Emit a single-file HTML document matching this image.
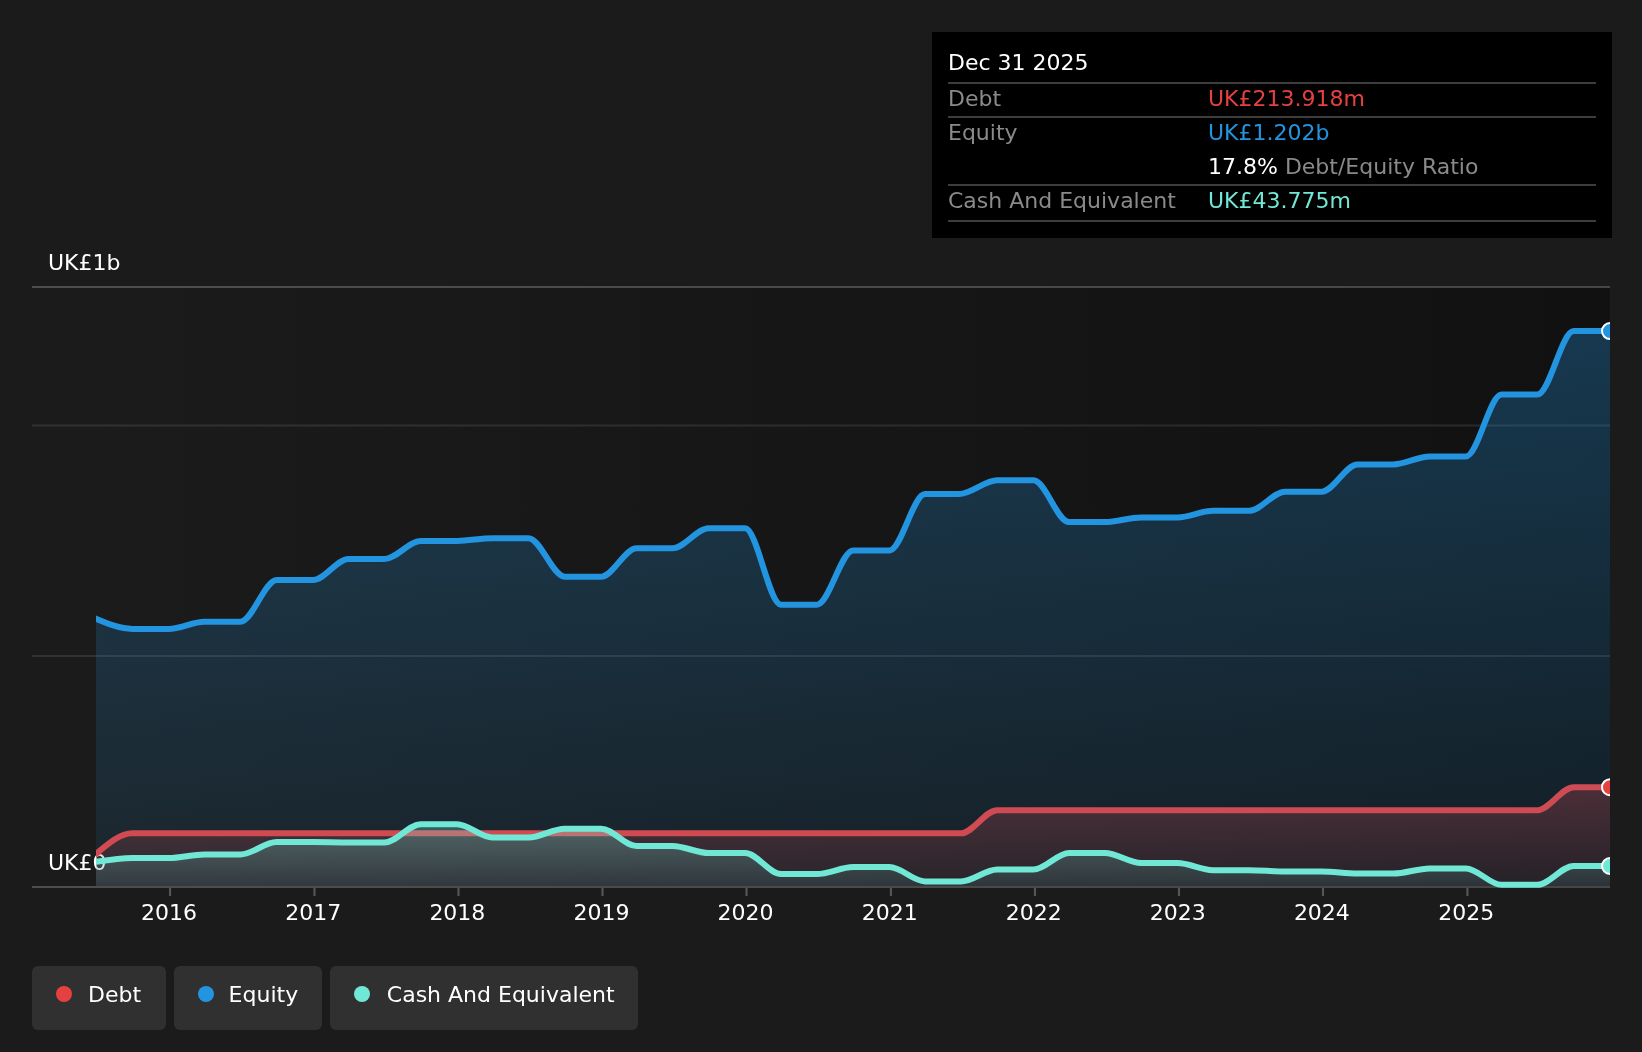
<!DOCTYPE html>
<html lang="en"><head><meta charset="utf-8"><title>Debt to Equity History</title>
<style>
html,body{margin:0;padding:0;background:#1b1b1b;}
body{width:1642px;height:1052px;position:relative;overflow:hidden;}
svg text{white-space:pre;}
.wrap{position:absolute;left:0;top:0;width:1642px;height:1052px;will-change:transform;font-family:"DejaVu Sans","Liberation Sans",sans-serif;font-size:22px;line-height:26px;color:#fff;}
.legend-item{position:absolute;top:966px;height:64px;border-radius:6px;background:#303030;}
.legend-item .dot{position:absolute;left:24px;top:20px;width:16px;height:16px;border-radius:50%;}
.legend-label{position:absolute;top:16px;white-space:nowrap;}
.tooltip{position:absolute;left:932px;top:32px;width:680px;height:206px;background:#000;}
.tt-row{position:absolute;left:16px;width:648px;height:26px;white-space:nowrap;}
.tt-key{position:absolute;left:0;top:0;color:#8a8a8a;}
.tt-val{position:absolute;left:260px;top:0;}
.tt-sep{position:absolute;left:16px;width:648px;height:2px;background:#3d3d3d;}
</style></head><body>
<div class="wrap">
<svg width="1642" height="1052" viewBox="0 0 1642 1052" style="position:absolute;left:0;top:0;display:block" font-family='"DejaVu Sans","Liberation Sans",sans-serif' font-size="22">
<defs>
<linearGradient id="gbg" gradientUnits="userSpaceOnUse" x1="96" y1="0" x2="1610" y2="0"><stop offset="0" stop-color="#1b1b1b"/><stop offset="1" stop-color="#111111"/></linearGradient>
<linearGradient id="ge" gradientUnits="userSpaceOnUse" x1="0" y1="331" x2="0" y2="886"><stop offset="0" stop-color="#2394df" stop-opacity="0.30"/><stop offset="1" stop-color="#2394df" stop-opacity="0.09"/></linearGradient>
<linearGradient id="gd" gradientUnits="userSpaceOnUse" x1="0" y1="787" x2="0" y2="886"><stop offset="0" stop-color="#e64141" stop-opacity="0.30"/><stop offset="1" stop-color="#e64141" stop-opacity="0.09"/></linearGradient>
<linearGradient id="gc" gradientUnits="userSpaceOnUse" x1="0" y1="824" x2="0" y2="886"><stop offset="0" stop-color="#71e7d6" stop-opacity="0.30"/><stop offset="1" stop-color="#71e7d6" stop-opacity="0.09"/></linearGradient>
<clipPath id="cp"><rect x="96" y="280" width="1514" height="608"/></clipPath>
</defs>
<rect x="0" y="0" width="1642" height="1052" fill="#1b1b1b"/>
<rect x="96" y="286" width="1514" height="602" fill="url(#gbg)"/>
<rect x="32" y="286" width="1578" height="2" fill="#ffffff" fill-opacity="0.224"/>
<rect x="32" y="424.5" width="1578" height="2" fill="#ffffff" fill-opacity="0.1"/>
<rect x="32" y="655" width="1578" height="2" fill="#ffffff" fill-opacity="0.1"/>
<rect x="32" y="886" width="1578" height="2" fill="#ffffff" fill-opacity="0.224"/>
<text x="48" y="270" fill="#ffffff">UK£1b</text>
<text x="48" y="870" fill="#ffffff">UK£0</text>
<g clip-path="url(#cp)">
<path d="M88.00,860.84 L96.00,854.00C108.10,843.65 120.20,833.30 132.30,833.30C144.40,833.30 156.50,833.30 168.60,833.30C180.57,833.30 192.54,833.30 204.51,833.30C216.48,833.30 228.45,833.30 240.42,833.30C252.52,833.30 264.62,833.30 276.72,833.30C288.82,833.30 300.92,833.30 313.02,833.30C324.86,833.30 336.69,833.30 348.53,833.30C360.50,833.30 372.47,833.30 384.44,833.30C396.54,833.30 408.64,833.30 420.74,833.30C432.84,833.30 444.94,833.30 457.04,833.30C468.88,833.30 480.71,833.30 492.55,833.30C504.52,833.30 516.49,833.30 528.46,833.30C540.56,833.30 552.66,833.30 564.76,833.30C576.86,833.30 588.96,833.30 601.06,833.30C612.90,833.30 624.74,833.30 636.57,833.30C648.54,833.30 660.51,833.30 672.48,833.30C684.58,833.30 696.68,833.30 708.78,833.30C720.88,833.30 732.98,833.30 745.08,833.30C757.05,833.30 769.02,833.30 780.99,833.30C792.96,833.30 804.93,833.30 816.90,833.30C829.00,833.30 841.10,833.30 853.20,833.30C865.30,833.30 877.40,833.30 889.50,833.30C901.34,833.30 913.17,833.30 925.01,833.30C936.98,833.30 948.95,833.30 960.92,833.30C973.02,833.30 985.12,810.20 997.22,810.20C1009.32,810.20 1021.42,810.20 1033.52,810.20C1045.36,810.20 1057.19,810.20 1069.03,810.20C1081.00,810.20 1092.97,810.20 1104.94,810.20C1117.04,810.20 1129.14,810.20 1141.24,810.20C1153.34,810.20 1165.44,810.20 1177.54,810.20C1189.38,810.20 1201.22,810.20 1213.05,810.20C1225.02,810.20 1236.99,810.20 1248.96,810.20C1261.06,810.20 1273.16,810.20 1285.26,810.20C1297.36,810.20 1309.46,810.20 1321.56,810.20C1333.53,810.20 1345.50,810.20 1357.47,810.20C1369.44,810.20 1381.41,810.20 1393.38,810.20C1405.48,810.20 1417.58,810.20 1429.68,810.20C1441.78,810.20 1453.88,810.20 1465.98,810.20C1477.82,810.20 1489.65,810.20 1501.49,810.20C1513.46,810.20 1525.43,810.20 1537.40,810.20C1549.50,810.20 1561.60,787.20 1573.70,787.20C1585.80,787.20 1597.90,787.20 1610.00,787.20L1618.00,787.20L1618.00,886 L88.00,886 Z" fill="url(#gd)" stroke="none"/>
<path d="M88.00,860.84 L96.00,854.00C108.10,843.65 120.20,833.30 132.30,833.30C144.40,833.30 156.50,833.30 168.60,833.30C180.57,833.30 192.54,833.30 204.51,833.30C216.48,833.30 228.45,833.30 240.42,833.30C252.52,833.30 264.62,833.30 276.72,833.30C288.82,833.30 300.92,833.30 313.02,833.30C324.86,833.30 336.69,833.30 348.53,833.30C360.50,833.30 372.47,833.30 384.44,833.30C396.54,833.30 408.64,833.30 420.74,833.30C432.84,833.30 444.94,833.30 457.04,833.30C468.88,833.30 480.71,833.30 492.55,833.30C504.52,833.30 516.49,833.30 528.46,833.30C540.56,833.30 552.66,833.30 564.76,833.30C576.86,833.30 588.96,833.30 601.06,833.30C612.90,833.30 624.74,833.30 636.57,833.30C648.54,833.30 660.51,833.30 672.48,833.30C684.58,833.30 696.68,833.30 708.78,833.30C720.88,833.30 732.98,833.30 745.08,833.30C757.05,833.30 769.02,833.30 780.99,833.30C792.96,833.30 804.93,833.30 816.90,833.30C829.00,833.30 841.10,833.30 853.20,833.30C865.30,833.30 877.40,833.30 889.50,833.30C901.34,833.30 913.17,833.30 925.01,833.30C936.98,833.30 948.95,833.30 960.92,833.30C973.02,833.30 985.12,810.20 997.22,810.20C1009.32,810.20 1021.42,810.20 1033.52,810.20C1045.36,810.20 1057.19,810.20 1069.03,810.20C1081.00,810.20 1092.97,810.20 1104.94,810.20C1117.04,810.20 1129.14,810.20 1141.24,810.20C1153.34,810.20 1165.44,810.20 1177.54,810.20C1189.38,810.20 1201.22,810.20 1213.05,810.20C1225.02,810.20 1236.99,810.20 1248.96,810.20C1261.06,810.20 1273.16,810.20 1285.26,810.20C1297.36,810.20 1309.46,810.20 1321.56,810.20C1333.53,810.20 1345.50,810.20 1357.47,810.20C1369.44,810.20 1381.41,810.20 1393.38,810.20C1405.48,810.20 1417.58,810.20 1429.68,810.20C1441.78,810.20 1453.88,810.20 1465.98,810.20C1477.82,810.20 1489.65,810.20 1501.49,810.20C1513.46,810.20 1525.43,810.20 1537.40,810.20C1549.50,810.20 1561.60,787.20 1573.70,787.20C1585.80,787.20 1597.90,787.20 1610.00,787.20L1618.00,787.20" fill="none" stroke="#e64141" stroke-width="6" stroke-linejoin="round" stroke-linecap="butt"/>

<path d="M88.00,615.33 L96.00,618.70C108.10,623.80 120.20,628.90 132.30,628.90C144.40,628.90 156.50,628.90 168.60,628.90C180.57,628.90 192.54,621.70 204.51,621.70C216.48,621.70 228.45,621.70 240.42,621.70C252.52,621.70 264.62,580.00 276.72,580.00C288.82,580.00 300.92,580.00 313.02,580.00C324.86,580.00 336.69,559.00 348.53,559.00C360.50,559.00 372.47,559.00 384.44,559.00C396.54,559.00 408.64,541.00 420.74,541.00C432.84,541.00 444.94,541.00 457.04,541.00C468.88,541.00 480.71,538.20 492.55,538.20C504.52,538.20 516.49,538.20 528.46,538.20C540.56,538.20 552.66,576.70 564.76,576.70C576.86,576.70 588.96,576.70 601.06,576.70C612.90,576.70 624.74,548.20 636.57,548.20C648.54,548.20 660.51,548.20 672.48,548.20C684.58,548.20 696.68,528.30 708.78,528.30C720.88,528.30 732.98,528.30 745.08,528.30C757.05,528.30 769.02,604.70 780.99,604.70C792.96,604.70 804.93,604.70 816.90,604.70C829.00,604.70 841.10,550.40 853.20,550.40C865.30,550.40 877.40,550.40 889.50,550.40C901.34,550.40 913.17,494.10 925.01,494.10C936.35,494.10 947.68,494.10 959.02,494.10C971.75,494.10 984.48,480.30 997.22,480.30C1009.32,480.30 1021.42,480.30 1033.52,480.30C1045.36,480.30 1057.19,522.10 1069.03,522.10C1081.00,522.10 1092.97,522.10 1104.94,522.10C1117.04,522.10 1129.14,517.40 1141.24,517.40C1153.34,517.40 1165.44,517.40 1177.54,517.40C1189.38,517.40 1201.22,510.80 1213.05,510.80C1225.02,510.80 1236.99,510.80 1248.96,510.80C1261.06,510.80 1273.16,491.70 1285.26,491.70C1297.36,491.70 1309.46,491.70 1321.56,491.70C1333.53,491.70 1345.50,464.40 1357.47,464.40C1369.44,464.40 1381.41,464.40 1393.38,464.40C1405.48,464.40 1417.58,456.40 1429.68,456.40C1441.78,456.40 1453.88,456.40 1465.98,456.40C1477.82,456.40 1489.65,394.60 1501.49,394.60C1513.46,394.60 1525.43,394.60 1537.40,394.60C1549.50,394.60 1561.60,331.10 1573.70,331.10C1585.80,331.10 1597.90,331.10 1610.00,331.10L1618.00,331.10L1618.00,886 L88.00,886 Z" fill="url(#ge)" stroke="none"/>
<path d="M88.00,615.33 L96.00,618.70C108.10,623.80 120.20,628.90 132.30,628.90C144.40,628.90 156.50,628.90 168.60,628.90C180.57,628.90 192.54,621.70 204.51,621.70C216.48,621.70 228.45,621.70 240.42,621.70C252.52,621.70 264.62,580.00 276.72,580.00C288.82,580.00 300.92,580.00 313.02,580.00C324.86,580.00 336.69,559.00 348.53,559.00C360.50,559.00 372.47,559.00 384.44,559.00C396.54,559.00 408.64,541.00 420.74,541.00C432.84,541.00 444.94,541.00 457.04,541.00C468.88,541.00 480.71,538.20 492.55,538.20C504.52,538.20 516.49,538.20 528.46,538.20C540.56,538.20 552.66,576.70 564.76,576.70C576.86,576.70 588.96,576.70 601.06,576.70C612.90,576.70 624.74,548.20 636.57,548.20C648.54,548.20 660.51,548.20 672.48,548.20C684.58,548.20 696.68,528.30 708.78,528.30C720.88,528.30 732.98,528.30 745.08,528.30C757.05,528.30 769.02,604.70 780.99,604.70C792.96,604.70 804.93,604.70 816.90,604.70C829.00,604.70 841.10,550.40 853.20,550.40C865.30,550.40 877.40,550.40 889.50,550.40C901.34,550.40 913.17,494.10 925.01,494.10C936.35,494.10 947.68,494.10 959.02,494.10C971.75,494.10 984.48,480.30 997.22,480.30C1009.32,480.30 1021.42,480.30 1033.52,480.30C1045.36,480.30 1057.19,522.10 1069.03,522.10C1081.00,522.10 1092.97,522.10 1104.94,522.10C1117.04,522.10 1129.14,517.40 1141.24,517.40C1153.34,517.40 1165.44,517.40 1177.54,517.40C1189.38,517.40 1201.22,510.80 1213.05,510.80C1225.02,510.80 1236.99,510.80 1248.96,510.80C1261.06,510.80 1273.16,491.70 1285.26,491.70C1297.36,491.70 1309.46,491.70 1321.56,491.70C1333.53,491.70 1345.50,464.40 1357.47,464.40C1369.44,464.40 1381.41,464.40 1393.38,464.40C1405.48,464.40 1417.58,456.40 1429.68,456.40C1441.78,456.40 1453.88,456.40 1465.98,456.40C1477.82,456.40 1489.65,394.60 1501.49,394.60C1513.46,394.60 1525.43,394.60 1537.40,394.60C1549.50,394.60 1561.60,331.10 1573.70,331.10C1585.80,331.10 1597.90,331.10 1610.00,331.10L1618.00,331.10" fill="none" stroke="#2394df" stroke-width="6" stroke-linejoin="round" stroke-linecap="butt"/>

<path d="M88.00,863.19 L96.00,861.90C108.10,859.95 120.20,858.00 132.30,858.00C144.40,858.00 156.50,858.00 168.60,858.00C180.57,858.00 192.54,854.40 204.51,854.40C216.48,854.40 228.45,854.40 240.42,854.40C252.52,854.40 264.62,842.10 276.72,842.10C288.82,842.10 300.92,842.10 313.02,842.10C324.86,842.10 336.69,842.50 348.53,842.50C360.50,842.50 372.47,842.50 384.44,842.50C396.54,842.50 408.64,824.20 420.74,824.20C432.84,824.20 444.94,824.20 457.04,824.20C468.88,824.20 480.71,837.50 492.55,837.50C504.52,837.50 516.49,837.50 528.46,837.50C540.56,837.50 552.66,828.70 564.76,828.70C576.86,828.70 588.96,828.70 601.06,828.70C612.90,828.70 624.74,846.00 636.57,846.00C648.54,846.00 660.51,846.00 672.48,846.00C684.58,846.00 696.68,853.00 708.78,853.00C720.88,853.00 732.98,853.00 745.08,853.00C757.05,853.00 769.02,874.00 780.99,874.00C792.96,874.00 804.93,874.00 816.90,874.00C829.00,874.00 841.10,867.10 853.20,867.10C865.30,867.10 877.40,867.10 889.50,867.10C901.34,867.10 913.17,881.40 925.01,881.40C936.98,881.40 948.95,881.40 960.92,881.40C973.02,881.40 985.12,869.50 997.22,869.50C1009.32,869.50 1021.42,869.50 1033.52,869.50C1045.36,869.50 1057.19,853.00 1069.03,853.00C1081.00,853.00 1092.97,853.00 1104.94,853.00C1117.04,853.00 1129.14,863.10 1141.24,863.10C1153.34,863.10 1165.44,863.10 1177.54,863.10C1189.38,863.10 1201.22,870.20 1213.05,870.20C1225.02,870.20 1236.99,870.20 1248.96,870.20C1261.06,870.20 1273.16,871.50 1285.26,871.50C1297.36,871.50 1309.46,871.50 1321.56,871.50C1333.53,871.50 1345.50,873.60 1357.47,873.60C1369.44,873.60 1381.41,873.60 1393.38,873.60C1405.48,873.60 1417.58,868.40 1429.68,868.40C1441.78,868.40 1453.88,868.40 1465.98,868.40C1477.82,868.40 1489.65,884.80 1501.49,884.80C1513.46,884.80 1525.43,884.80 1537.40,884.80C1549.50,884.80 1561.60,866.00 1573.70,866.00C1585.80,866.00 1597.90,866.00 1610.00,866.00L1618.00,866.00L1618.00,886 L88.00,886 Z" fill="url(#gc)" stroke="none"/>
<path d="M88.00,863.19 L96.00,861.90C108.10,859.95 120.20,858.00 132.30,858.00C144.40,858.00 156.50,858.00 168.60,858.00C180.57,858.00 192.54,854.40 204.51,854.40C216.48,854.40 228.45,854.40 240.42,854.40C252.52,854.40 264.62,842.10 276.72,842.10C288.82,842.10 300.92,842.10 313.02,842.10C324.86,842.10 336.69,842.50 348.53,842.50C360.50,842.50 372.47,842.50 384.44,842.50C396.54,842.50 408.64,824.20 420.74,824.20C432.84,824.20 444.94,824.20 457.04,824.20C468.88,824.20 480.71,837.50 492.55,837.50C504.52,837.50 516.49,837.50 528.46,837.50C540.56,837.50 552.66,828.70 564.76,828.70C576.86,828.70 588.96,828.70 601.06,828.70C612.90,828.70 624.74,846.00 636.57,846.00C648.54,846.00 660.51,846.00 672.48,846.00C684.58,846.00 696.68,853.00 708.78,853.00C720.88,853.00 732.98,853.00 745.08,853.00C757.05,853.00 769.02,874.00 780.99,874.00C792.96,874.00 804.93,874.00 816.90,874.00C829.00,874.00 841.10,867.10 853.20,867.10C865.30,867.10 877.40,867.10 889.50,867.10C901.34,867.10 913.17,881.40 925.01,881.40C936.98,881.40 948.95,881.40 960.92,881.40C973.02,881.40 985.12,869.50 997.22,869.50C1009.32,869.50 1021.42,869.50 1033.52,869.50C1045.36,869.50 1057.19,853.00 1069.03,853.00C1081.00,853.00 1092.97,853.00 1104.94,853.00C1117.04,853.00 1129.14,863.10 1141.24,863.10C1153.34,863.10 1165.44,863.10 1177.54,863.10C1189.38,863.10 1201.22,870.20 1213.05,870.20C1225.02,870.20 1236.99,870.20 1248.96,870.20C1261.06,870.20 1273.16,871.50 1285.26,871.50C1297.36,871.50 1309.46,871.50 1321.56,871.50C1333.53,871.50 1345.50,873.60 1357.47,873.60C1369.44,873.60 1381.41,873.60 1393.38,873.60C1405.48,873.60 1417.58,868.40 1429.68,868.40C1441.78,868.40 1453.88,868.40 1465.98,868.40C1477.82,868.40 1489.65,884.80 1501.49,884.80C1513.46,884.80 1525.43,884.80 1537.40,884.80C1549.50,884.80 1561.60,866.00 1573.70,866.00C1585.80,866.00 1597.90,866.00 1610.00,866.00L1618.00,866.00" fill="none" stroke="#71e7d6" stroke-width="6" stroke-linejoin="round" stroke-linecap="butt"/>

</g>
<g clip-path="url(#cp)">
<circle cx="1610" cy="331.1" r="8" fill="#2394df" stroke="#ffffff" stroke-width="2"/>
<circle cx="1610" cy="787.2" r="8" fill="#e64141" stroke="#ffffff" stroke-width="2"/>
<circle cx="1610" cy="866.0" r="8" fill="#71e7d6" stroke="#ffffff" stroke-width="2"/>
</g>
<rect x="168.95" y="888" width="2.2" height="8" fill="#555555"/>
<text x="168.95" y="920" fill="#ffffff" text-anchor="middle">2016</text>
<rect x="313.36" y="888" width="2.2" height="8" fill="#555555"/>
<text x="313.36" y="920" fill="#ffffff" text-anchor="middle">2017</text>
<rect x="457.38" y="888" width="2.2" height="8" fill="#555555"/>
<text x="457.38" y="920" fill="#ffffff" text-anchor="middle">2018</text>
<rect x="601.40" y="888" width="2.2" height="8" fill="#555555"/>
<text x="601.40" y="920" fill="#ffffff" text-anchor="middle">2019</text>
<rect x="745.42" y="888" width="2.2" height="8" fill="#555555"/>
<text x="745.42" y="920" fill="#ffffff" text-anchor="middle">2020</text>
<rect x="889.83" y="888" width="2.2" height="8" fill="#555555"/>
<text x="889.83" y="920" fill="#ffffff" text-anchor="middle">2021</text>
<rect x="1033.85" y="888" width="2.2" height="8" fill="#555555"/>
<text x="1033.85" y="920" fill="#ffffff" text-anchor="middle">2022</text>
<rect x="1177.87" y="888" width="2.2" height="8" fill="#555555"/>
<text x="1177.87" y="920" fill="#ffffff" text-anchor="middle">2023</text>
<rect x="1321.88" y="888" width="2.2" height="8" fill="#555555"/>
<text x="1321.88" y="920" fill="#ffffff" text-anchor="middle">2024</text>
<rect x="1466.30" y="888" width="2.2" height="8" fill="#555555"/>
<text x="1466.30" y="920" fill="#ffffff" text-anchor="middle">2025</text>
</svg>
<div class="legend">
<div class="legend-item" style="left:32px;width:134px"><span class="dot" style="background:#e64141"></span><span class="legend-label" style="left:56.0px">Debt</span></div>
<div class="legend-item" style="left:174px;width:148px"><span class="dot" style="background:#2394df"></span><span class="legend-label" style="left:54.6px">Equity</span></div>
<div class="legend-item" style="left:330px;width:308px"><span class="dot" style="background:#71e7d6"></span><span class="legend-label" style="left:56.8px">Cash And Equivalent</span></div>
</div>
<div class="tooltip">
<div class="tt-row tt-title" style="top:18px"><span class="tt-key" style="color:#ffffff">Dec 31 2025</span></div>
<div class="tt-row" style="top:54px"><span class="tt-key">Debt</span><span class="tt-val" style="color:#e64141">UK£213.918m</span></div>
<div class="tt-row" style="top:88px"><span class="tt-key">Equity</span><span class="tt-val" style="color:#2394df">UK£1.202b</span></div>
<div class="tt-row" style="top:122px"><span class="tt-key"></span><span class="tt-val" style="color:#8a8a8a"><span style="color:#ffffff">17.8%</span> <span style="color:#8a8a8a">Debt/Equity Ratio</span></span></div>
<div class="tt-row" style="top:156px"><span class="tt-key">Cash And Equivalent</span><span class="tt-val" style="color:#71e7d6">UK£43.775m</span></div>
<div class="tt-sep" style="top:50px"></div>
<div class="tt-sep" style="top:84px"></div>
<div class="tt-sep" style="top:152px"></div>
<div class="tt-sep" style="top:188px"></div>
</div>
</div>
</body></html>
